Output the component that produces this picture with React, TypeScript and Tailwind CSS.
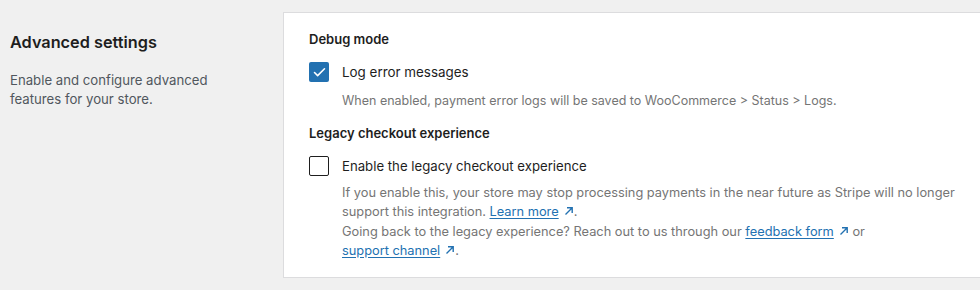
import { Check } from 'lucide-react';

function ExternalArrow() {
    return (
        <svg width="10" height="10" viewBox="0 0 10 10" className="ml-[5px] inline-block align-[0px]" fill="none" stroke="currentColor" strokeWidth="1.4">
            <path d="M1.5 8.5L8 2M3 1.8h5.2V7" />
        </svg>
    );
}

function DocLink({ children }: { children: React.ReactNode }) {
    return (
        <a href="#" className="text-[#2271b1] underline underline-offset-2">
            {children}
            <ExternalArrow />
        </a>
    );
}

export default function App() {
    return (
        <div className="flex min-h-[290px] bg-[#f0f0f0] font-['Inter',sans-serif] text-[#1e1e1e]">
            <div className="w-[283px] shrink-0 pl-[10px] pt-[30px]">
                <h2 className="text-[16.3px] font-semibold leading-6">Advanced settings</h2>
                <p className="mt-[17px] w-[230px] text-[13.2px] leading-[19px] text-[#50575e]">
                    Enable and configure advanced features for your store.
                </p>
            </div>
            <div className="mb-[13px] mr-[10px] mt-[12px] flex-1 border border-[#dcdcde] bg-white pl-[25px] pr-6 pt-[18px] pb-[17px]">
                <h3 className="text-[13px] font-semibold leading-4">Debug mode</h3>
                <label className="mt-[15px] flex items-center gap-[13px]">
                    <span className="flex h-5 w-5 items-center justify-center rounded-[2px] bg-[#2271b1] text-white">
                        <Check size={15} strokeWidth={2.5} />
                    </span>
                    <span className="text-[13.4px] leading-5">Log error messages</span>
                </label>
                <p className="ml-[33px] mt-[9px] text-[12.5px] leading-[19px] text-[#757575]">
                    When enabled, payment error logs will be saved to WooCommerce &gt; Status &gt; Logs.
                </p>
                <h3 className="mt-[15px] text-[13px] font-semibold leading-4">Legacy checkout experience</h3>
                <label className="mt-[15px] flex items-center gap-[13px]">
                    <span className="h-5 w-5 rounded-[2px] border-[1.5px] border-[#1e1e1e] bg-white" />
                    <span className="text-[13.2px] leading-5">Enable the legacy checkout experience</span>
                </label>
                <p className="ml-[33px] mt-[7px] w-[625px] text-[12.8px] leading-[19.3px] text-[#757575]">
                    If you enable this, your store may stop processing payments in the near future as Stripe will no longer support this integration.{' '}
                    <DocLink>Learn more</DocLink>.
                    <br />
                    Going back to the legacy experience? Reach out to us through our <DocLink>feedback form</DocLink> or
                    <br />
                    <DocLink>support channel</DocLink>.
                </p>
            </div>
        </div>
    );
}
